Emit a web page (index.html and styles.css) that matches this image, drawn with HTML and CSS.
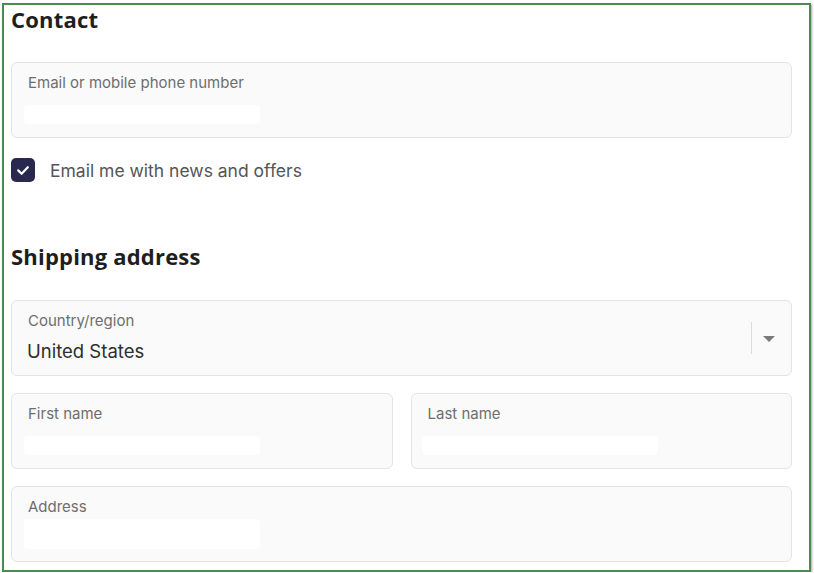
FILE: index.html
```html
<!DOCTYPE html>
<html lang="en">
<head>
<meta charset="utf-8">
<title>Checkout</title>
<link rel="stylesheet" href="styles.css">
</head>
<body>
<div class="frame">
  <h2 class="heading">Contact</h2>
  <div class="field field-first">
    <span class="label">Email or mobile phone number</span>
    <div class="fill"></div>
  </div>
  <label class="check-row">
    <span class="checkbox">
      <svg width="24" height="24" viewBox="0 0 24 24"><polyline points="7.2,12.4 10.6,15.8 16.8,9.2" fill="none" stroke="#fff" stroke-width="2.2" stroke-linecap="round" stroke-linejoin="round"/></svg>
    </span>
    <span class="check-text">Email me with news and offers</span>
  </label>
  <h2 class="heading heading-ship">Shipping address</h2>
  <div class="field field-select">
    <div class="select-main">
      <span class="label">Country/region</span>
      <span class="value">United States</span>
    </div>
    <span class="sep"></span>
    <span class="arrow"></span>
  </div>
  <div class="row">
    <div class="field">
      <span class="label">First name</span>
      <div class="fill"></div>
    </div>
    <div class="field">
      <span class="label">Last name</span>
      <div class="fill fill-last"></div>
    </div>
  </div>
  <div class="field field-address">
    <span class="label">Address</span>
    <div class="fill fill-tall"></div>
  </div>
</div>
</body>
</html>
```

FILE: styles.css
```css
html, body {
  margin: 0;
  padding: 0;
  background: #ffffff;
}
body {
  font-family: Inter, "Noto Sans", sans-serif;
}
.frame {
  box-sizing: border-box;
  width: 809px;
  height: 569px;
  margin: 3px 0 0 2px;
  border: 2px solid #4b8b50;
  box-shadow: 1px 1px 2px rgba(0,0,0,0.35);
  padding: 0 17px 0 7px;
  overflow: hidden;
  display: flex;
  flex-direction: column;
}
.heading {
  margin: 0;
  font-family: "Open Sans", sans-serif;
  font-weight: 700;
  font-size: 22px;
  line-height: 28px;
  color: #1e1e1e;
  letter-spacing: 0.2px;
}
.heading-ship {
  margin-top: 60px;
}
.field {
  box-sizing: border-box;
  height: 76px;
  border: 1px solid #e4e4e4;
  border-radius: 6px;
  background: #fafafa;
  padding: 11px 16px 0 16px;
  display: flex;
  flex-direction: column;
  align-items: flex-start;
  flex-shrink: 0;
}
.field-first {
  margin-top: 29px;
}
.label {
  display: block;
  font-size: 15px;
  line-height: 18px;
  color: #6e6e6e;
}
.fill {
  width: 236px;
  height: 19px;
  margin: 13px 0 0 -4px;
  background: #ffffff;
  border-radius: 4px;
}
.fill-last {
  margin-left: -6px;
}
.fill-tall {
  height: 30px;
  margin-top: 3px;
}
.check-row {
  display: flex;
  align-items: center;
  gap: 15px;
  margin-top: 20px;
  height: 24px;
}
.checkbox {
  width: 24px;
  height: 24px;
  border-radius: 5px;
  background: #29284f;
  display: flex;
}
.check-text {
  font-size: 17.5px;
  line-height: 24px;
  color: #555555;
  padding-top: 1px;
}
.field-select {
  margin-top: 30px;
  flex-direction: row;
  align-items: center;
  padding: 0 16px 0 16px;
}
.select-main {
  flex: 1;
  display: flex;
  flex-direction: column;
  align-self: flex-start;
  padding-top: 11px;
}
.value {
  margin-top: 10px;
  font-size: 18.5px;
  line-height: 22px;
  color: #2e2e2e;
  margin-left: -1px;
}
.sep {
  width: 1px;
  height: 32px;
  background: #dcdcdc;
  margin-right: 11px;
}
.arrow {
  width: 0;
  height: 0;
  border-left: 6.5px solid transparent;
  border-right: 6.5px solid transparent;
  border-top: 6px solid #7a7a7a;
  margin-top: 2px;
}
.row {
  display: grid;
  grid-template-columns: 1fr 1fr;
  gap: 18px;
  margin-top: 17px;
}
.field-address {
  margin-top: 17px;
}
```
